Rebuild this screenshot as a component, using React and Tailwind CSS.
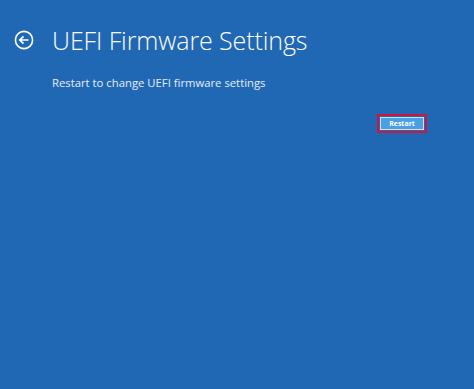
export default function App() {
  return (
    <div className="w-[474px] h-[389px] bg-[#2168b4] text-white overflow-hidden" style={{ fontFamily: '"Open Sans", "Noto Sans", sans-serif' }}>
      <div className="flex items-center pt-[22px] pl-[14px]">
        <svg width="20" height="20" viewBox="0 0 20 20" className="shrink-0">
          <circle cx="10" cy="10" r="8.6" fill="none" stroke="white" strokeWidth="1.6" />
          <path d="M14.5 10H6M9.5 6.3L5.8 10L9.5 13.7" fill="none" stroke="white" strokeWidth="1.7" />
        </svg>
        <h1 className="ml-[18px] text-[25px] font-light leading-[36px] tracking-[-0.1px]">UEFI Firmware Settings</h1>
      </div>
      <p className="mt-[17px] ml-[52px] text-[11.3px] leading-[16px] text-[#e6eef8]">Restart to change UEFI firmware settings</p>
      <div className="flex justify-end pr-[47px] mt-[23px]">
        <div className="border-2 border-[#d0163c] p-px">
          <div className="border border-[#cfe4f6] bg-[#4aa0e2] w-[44px] h-[13px] flex items-center justify-center">
            <span className="text-[7px] font-bold leading-none text-white">Restart</span>
          </div>
        </div>
      </div>
    </div>
  );
}
